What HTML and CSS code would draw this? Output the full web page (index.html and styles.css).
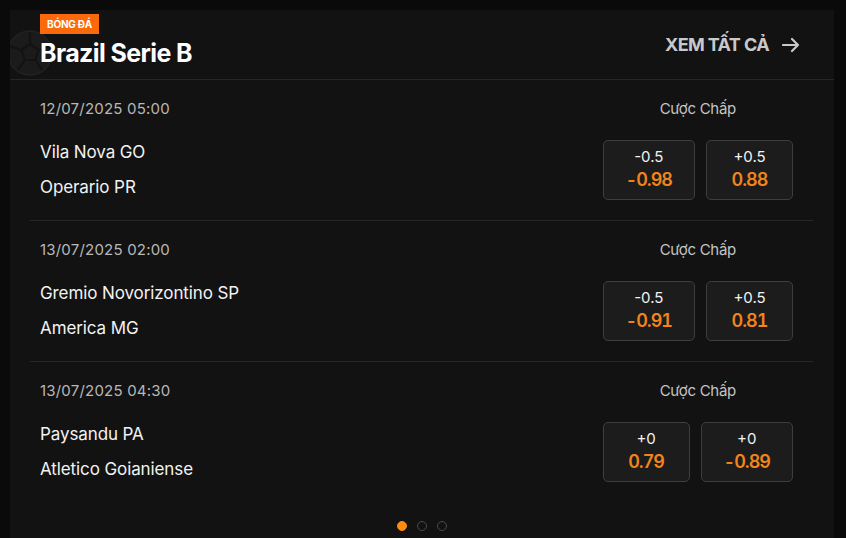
FILE: index.html
```html
<!DOCTYPE html>
<html lang="vi">
<head>
<meta charset="utf-8">
<title>Brazil Serie B</title>
<link rel="stylesheet" href="styles.css">
</head>
<body>
<div class="card">
  <svg class="ball" width="48" height="48" viewBox="0 0 48 48" aria-hidden="true">
    <circle cx="24" cy="24" r="22" fill="#1b1b1b" stroke="#222" stroke-width="1.5"/>
    <polygon points="24,15 32.5,21 29.3,31 18.7,31 15.5,21" fill="none" stroke="#131313" stroke-width="2.2"/>
    <path d="M24 15 V3 M32.5 21 L44 17 M29.3 31 L36 41 M18.7 31 L12 41 M15.5 21 L4 17" fill="none" stroke="#131313" stroke-width="2.2"/>
  </svg>
  <header class="head">
    <div class="head-left">
      <span class="badge">BÓNG ĐÁ</span>
      <h1 class="title">Brazil Serie B</h1>
    </div>
    <a class="see-all" href="#">XEM TẤT CẢ
      <svg width="18" height="16" viewBox="0 0 18 16" aria-hidden="true"><path d="M1 8 H16 M10 2 L16 8 L10 14" fill="none" stroke="#c9c9c9" stroke-width="2.2" stroke-linecap="round" stroke-linejoin="round"/></svg>
    </a>
  </header>
  <div class="list">
    <div class="row">
      <div class="info">
        <div class="date">12/07/2025 05:00</div>
        <div class="teams">
          <div class="team">Vila Nova GO</div>
          <div class="team">Operario PR</div>
        </div>
      </div>
      <div class="market">
        <div class="label">Cược Chấp</div>
        <div class="odds">
          <div class="odd"><span class="hcp">-0.5</span><span class="price">-0.98</span></div>
          <div class="odd"><span class="hcp">+0.5</span><span class="price">0.88</span></div>
        </div>
      </div>
    </div>
    <div class="row">
      <div class="info">
        <div class="date">13/07/2025 02:00</div>
        <div class="teams">
          <div class="team">Gremio Novorizontino SP</div>
          <div class="team">America MG</div>
        </div>
      </div>
      <div class="market">
        <div class="label">Cược Chấp</div>
        <div class="odds">
          <div class="odd"><span class="hcp">-0.5</span><span class="price">-0.91</span></div>
          <div class="odd"><span class="hcp">+0.5</span><span class="price">0.81</span></div>
        </div>
      </div>
    </div>
    <div class="row">
      <div class="info">
        <div class="date">13/07/2025 04:30</div>
        <div class="teams">
          <div class="team">Paysandu PA</div>
          <div class="team">Atletico Goianiense</div>
        </div>
      </div>
      <div class="market">
        <div class="label">Cược Chấp</div>
        <div class="odds">
          <div class="odd"><span class="hcp">+0</span><span class="price">0.79</span></div>
          <div class="odd"><span class="hcp">+0</span><span class="price">-0.89</span></div>
        </div>
      </div>
    </div>
  </div>
  <div class="dots">
    <span class="dot active"></span><span class="dot"></span><span class="dot"></span>
  </div>
</div>
</body>
</html>
```
FILE: styles.css
```css
html, body {
  margin: 0;
  padding: 0;
  background: #0a0a0a;
}
body {
  font-family: Inter, "Noto Sans", sans-serif;
  color: #f2f2f2;
}
.card {
  position: relative;
  margin: 10px 0 0 10px;
  width: 824px;
  height: 528px;
  background: #121212;
  overflow: hidden;
}
.ball {
  position: absolute;
  left: -4px;
  top: 19px;
  z-index: 0;
}
.head {
  position: relative;
  z-index: 1;
  height: 70px;
  border-bottom: 1px solid #262626;
  display: flex;
  justify-content: space-between;
  align-items: flex-start;
  padding: 4px 34px 0 30px;
  box-sizing: border-box;
}
.head-left {
  display: flex;
  flex-direction: column;
  align-items: flex-start;
}
.badge {
  display: block;
  background: #fa6a0a;
  color: #fff;
  font-size: 10px;
  font-weight: 700;
  line-height: 20px;
  height: 20px;
  padding: 0 7px;
  letter-spacing: -0.2px;
}
.title {
  margin: 4px 0 0;
  font-size: 25px;
  line-height: 30px;
  font-weight: 700;
  color: #fff;
  letter-spacing: -0.6px;
}
.see-all {
  display: flex;
  align-items: center;
  gap: 13px;
  margin-top: 20px;
  color: #c9c9c9;
  text-decoration: none;
  font-size: 18px;
  font-weight: 700;
  line-height: 22px;
  letter-spacing: -0.6px;
}
.list {
  padding: 0 21px 0 20px;
}
.row {
  display: flex;
  justify-content: space-between;
  padding: 19px 20px 20px 10px;
  border-bottom: 1px solid #262626;
}
.row:last-child {
  border-bottom: none;
}
.date {
  font-size: 15px;
  line-height: 20px;
  color: #b8b8b8;
  letter-spacing: 0.2px;
}
.teams {
  margin-top: 23px;
  display: flex;
  flex-direction: column;
  gap: 15px;
}
.team {
  font-size: 17px;
  line-height: 20px;
  color: #f2f2f2;
  letter-spacing: -0.1px;
}
.market {
  display: flex;
  flex-direction: column;
  align-items: center;
}
.label {
  font-size: 15px;
  line-height: 20px;
  color: #c4c4c4;
  letter-spacing: -0.3px;
}
.odds {
  margin-top: 21px;
  display: flex;
  gap: 11px;
}
.odd {
  height: 60px;
  min-width: 87px;
  box-sizing: border-box;
  padding: 0 22px;
  border: 1px solid #3e3e3e;
  border-radius: 5px;
  background: #1c1c1c;
  display: flex;
  flex-direction: column;
  align-items: center;
  justify-content: center;
}
.hcp {
  font-size: 15px;
  line-height: 20px;
  color: #f2f2f2;
}
.price {
  font-size: 18px;
  line-height: 26px;
  font-weight: 600;
  color: #f2841c;
  letter-spacing: -1px;
  font-variant-numeric: tabular-nums;
}
.dots {
  display: flex;
  justify-content: center;
  gap: 10px;
  margin-top: 19px;
}
.dot {
  width: 10px;
  height: 10px;
  box-sizing: border-box;
  border-radius: 50%;
  border: 1px solid #4a4a4a;
}
.dot.active {
  background: #ff8a0d;
  border-color: #ff8a0d;
}
```
